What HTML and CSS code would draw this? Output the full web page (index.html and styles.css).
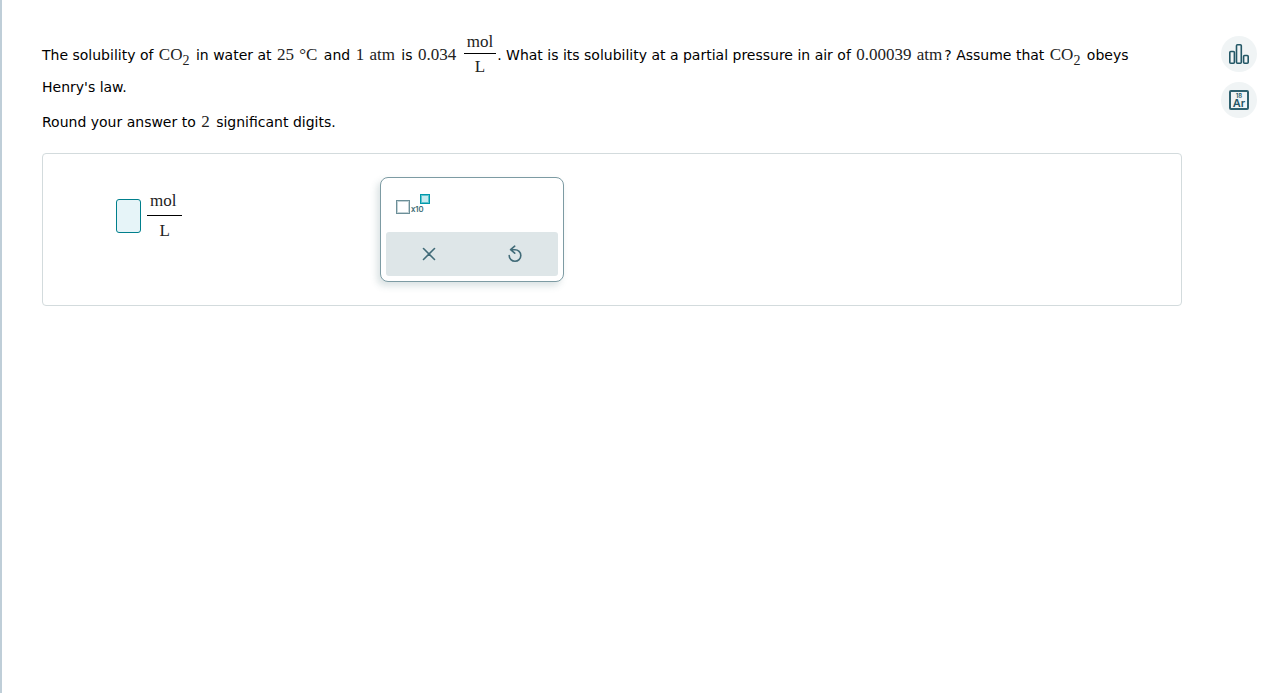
FILE: index.html
```html
<!DOCTYPE html>
<html lang="en">
<head>
<meta charset="utf-8">
<meta name="viewport" content="width=device-width, initial-scale=1">
<title>Henry's law</title>
<link rel="stylesheet" href="styles.css">
</head>
<body>
<div class="page">
  <main class="problem">
    <p class="question">The solubility of <span class="math">CO<span class="sub">2</span></span> in water at <span class="math">25 <span class="measure">°C</span></span> and <span class="math">1 <span class="measure">atm</span></span> is <span class="math">0.034</span> <span class="fraction inline"><span class="top">mol</span><span class="bottom">L</span></span>. What is its solubility at a partial pressure in air of <span class="math">0.00039 <span class="measure">atm</span></span>? Assume that <span class="math">CO<span class="sub">2</span></span> obeys Henry's law.</p>
    <p class="rounding">Round your answer to <span class="math">2</span> significant digits.</p>
    <section class="answer">
      <div class="entry">
        <input class="blank" type="text" aria-label="Solubility in moles per liter">
        <span class="fraction unit"><span class="top">mol</span><span class="bottom">L</span></span>
      </div>
      <div class="palette">
        <div class="symbols">
          <button class="symbol" type="button" aria-label="Scientific notation">
            <span class="base-box"></span><span class="times">x10</span><span class="power-box"></span>
          </button>
        </div>
        <div class="actions">
          <button class="action" type="button" aria-label="Clear">
            <svg width="18" height="18" viewBox="0 0 18 18"><path d="M3.500 3.500l11 11M14.500 3.500l-11 11"/></svg>
          </button>
          <button class="action" type="button" aria-label="Undo">
            <svg width="18" height="18" viewBox="0 0 18 18"><path d="M3.200 10.500A5.800 5.800 0 1 0 9 4.700H4.600M8.700 1.200L4.600 4.700L8.700 8.200"/></svg>
          </button>
        </div>
      </div>
    </section>
  </main>
  <aside class="tools">
    <button class="tool" type="button" aria-label="Data">
      <svg width="22" height="22" viewBox="0 0 22 22"><rect x="1.800" y="8.500" width="4.600" height="11.700" rx="1"/><rect x="8.500" y="1.800" width="4.800" height="18.400" rx="1"/><rect x="15.600" y="12.500" width="4.600" height="7.700" rx="1"/></svg>
    </button>
    <button class="tool" type="button" aria-label="Periodic table">
      <span class="element"><span class="number">18</span><span class="name">Ar</span></span>
    </button>
  </aside>
</div>
</body>
</html>
```
FILE: styles.css
```css
* { box-sizing: border-box; }
body {
  margin: 0;
  background: #fff;
  color: #000;
  font: 14px/32px "DejaVu Sans", Verdana, sans-serif;
}
button { border: 0; padding: 0; background: none; color: inherit; cursor: pointer; }
.page {
  display: flex;
  gap: 39px;
  min-height: 100vh;
  padding: 36px 12px 0 40px;
  border-left: 2px solid #bfced8;
}
.problem { flex: 1; min-width: 0; padding-top: 3px; }
.question, .rounding { margin: 0; }
.rounding { margin-top: 3px; }
.math, .fraction { font-family: "Liberation Serif", "Times New Roman", serif; font-size: 17px; color: #222; line-height: 20px; }
.math { margin: 0 2px 0 1px; white-space: nowrap; }
.measure { margin-left: 1px; }
.sub { font-size: 14px; vertical-align: -5px; line-height: 1; }
.fraction {
  display: inline-flex;
  flex-direction: column;
  vertical-align: middle;
  text-align: center;
}
.fraction .top { border-bottom: 1px solid #000; }
.inline { margin: -10px 1px; }
.inline .top { padding: 0 3px 1px; }
.inline .bottom { padding: 3px 0 4px; }
.unit .top { padding: 0 6px 4px 3px; }
.unit .bottom { padding-top: 5px; }
.answer {
  display: flex;
  align-items: flex-start;
  margin-top: 15px;
  padding: 23px 73px;
  border: 1px solid #d3dbdd;
  border-radius: 4px;
}
.entry { display: flex; align-items: center; gap: 6px; width: 264px; padding-top: 14px; }
.blank {
  width: 25px;
  height: 34px;
  border: 1px solid #007f8c;
  border-radius: 3px;
  background: #e6f4f8;
  font: inherit;
}
.palette {
  width: 184px;
  padding: 5px;
  border: 1px solid #7d9ba3;
  border-radius: 8px;
  background: #fff;
  box-shadow: -3px 4px 7px rgba(70, 110, 115, 0.2);
}
.symbols { padding: 11px 10px 8px; height: 49px; }
.symbol { display: flex; align-items: flex-end; height: 20px; }
.base-box { width: 14px; height: 14px; border: 1px solid #6c8f98; box-shadow: inset 0 0 0 1px #c3d2d6; }
.times { margin: 0 -4px 0 1px; font: 8px/10px Inter, sans-serif; color: #2f5f6c; -webkit-text-stroke: 0.2px #2f5f6c; }
.power-box { align-self: flex-start; width: 10px; height: 10px; border: 1px solid #0099ab; background: #c7ebf0; box-shadow: inset 0 0 0 1px #5fc3ce; }
.actions { display: flex; height: 44px; border-radius: 3px; background: #dee6e8; }
.action { flex: 1; display: flex; align-items: center; justify-content: center; }
.action svg { fill: none; stroke: #416b78; stroke-width: 1.6; stroke-linecap: round; stroke-linejoin: round; }
.tools { display: flex; flex-direction: column; gap: 10px; }
.tool {
  display: flex;
  align-items: center;
  justify-content: center;
  width: 36px;
  height: 36px;
  border-radius: 50%;
  background: #f0f4f5;
}
.tool svg { fill: none; stroke: #235766; stroke-width: 1.6; }
.element {
  display: flex;
  flex-direction: column;
  align-items: center;
  width: 20px;
  height: 20px;
  padding-top: 1px;
  border: 2px solid #2f6270;
  border-radius: 2px;
  color: #235766;
  font-family: Inter, sans-serif;
  font-weight: 600;
}
.number { font-size: 6px; line-height: 6px; }
.name { font-size: 11px; line-height: 9px; }
```
